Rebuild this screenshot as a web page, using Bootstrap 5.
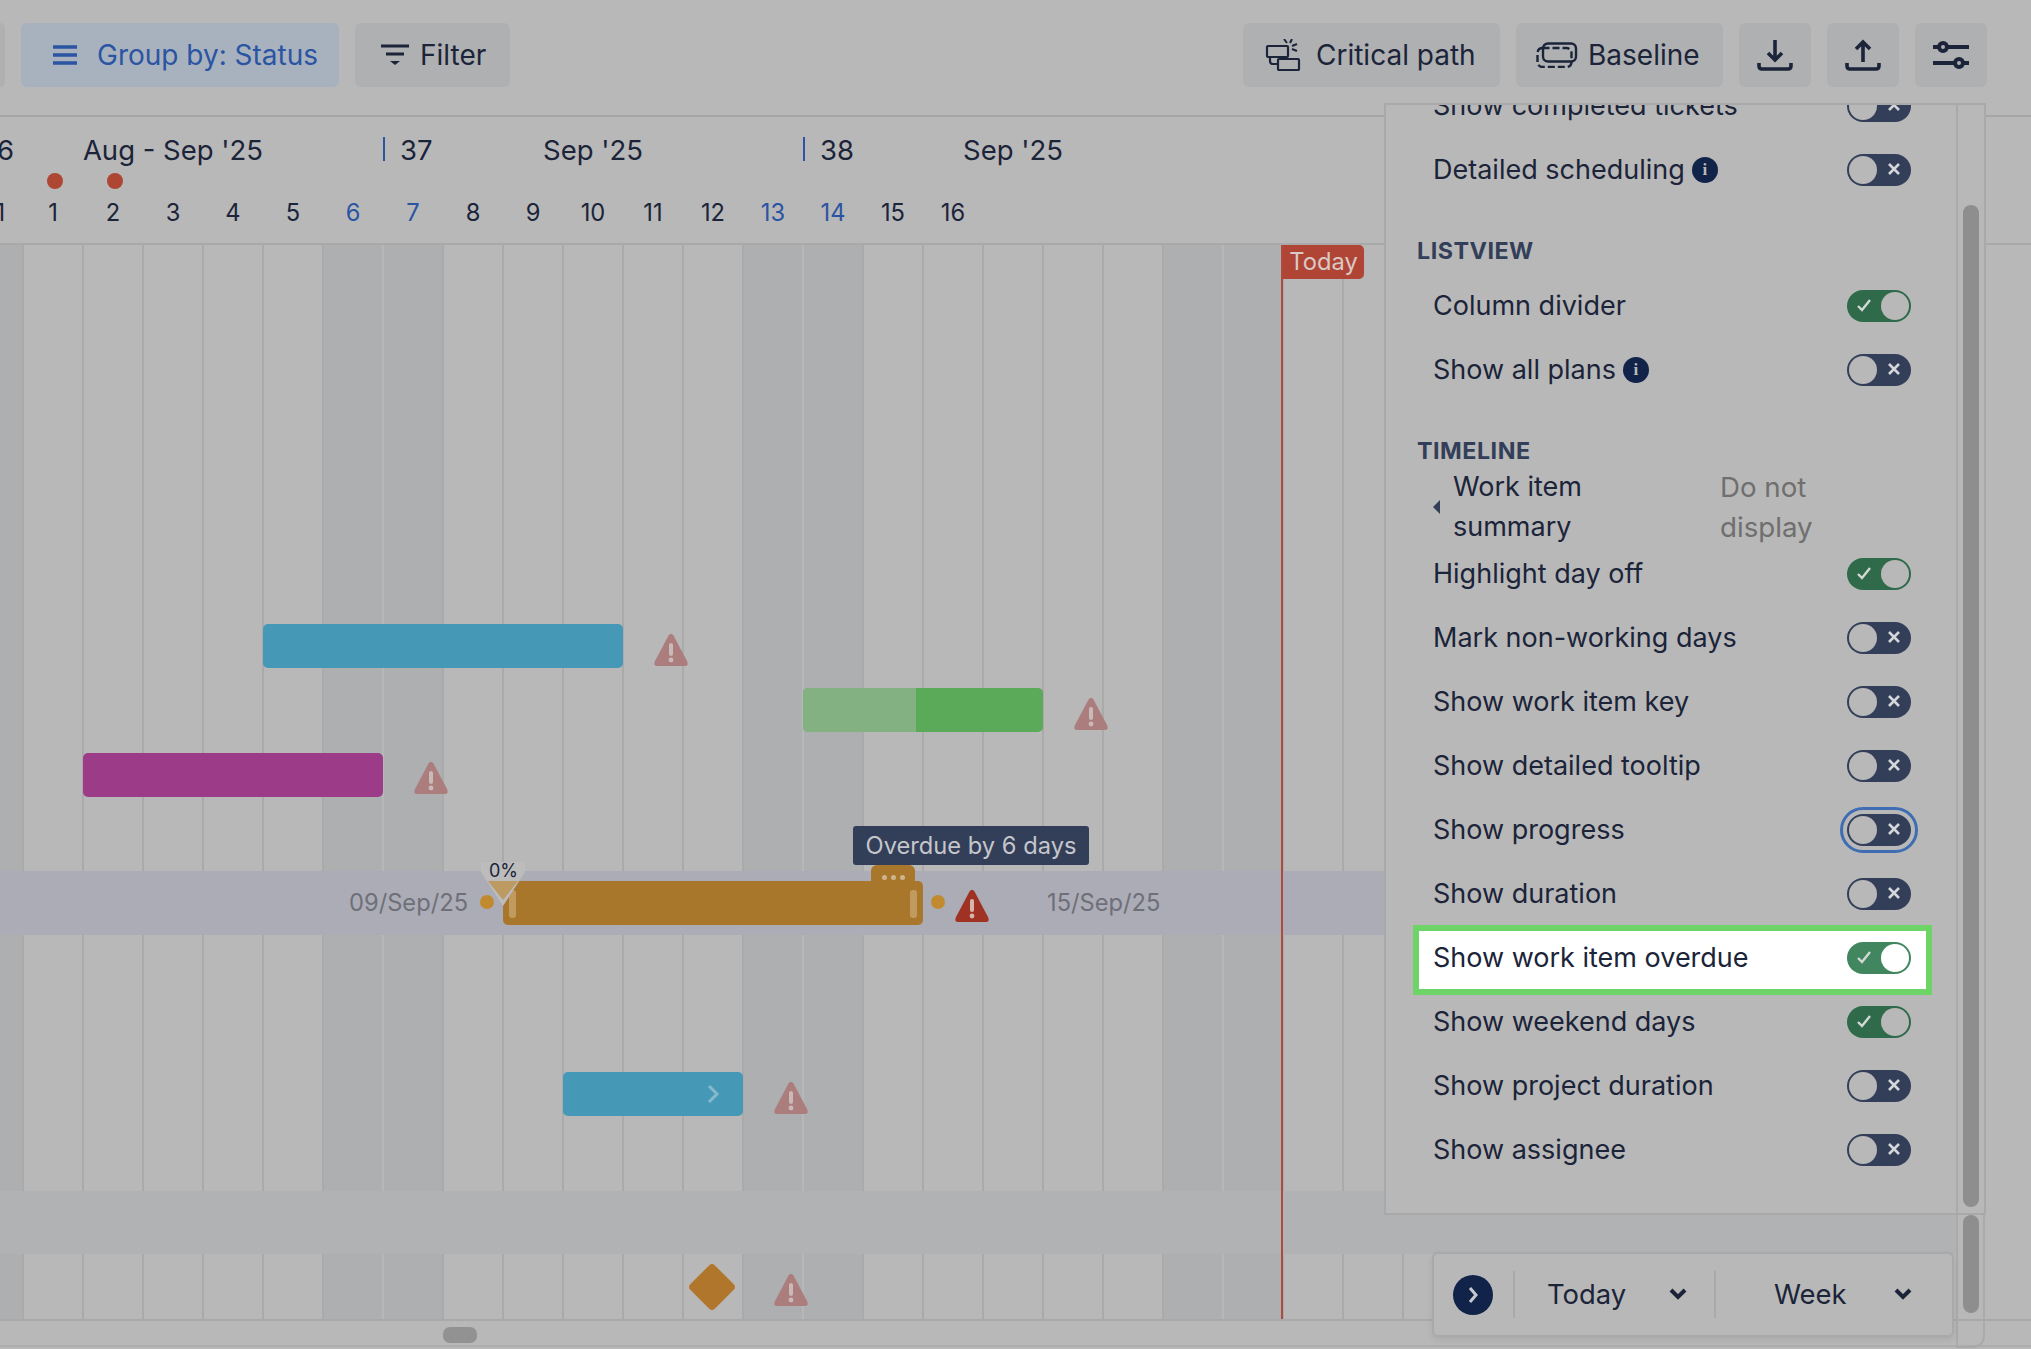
<!DOCTYPE html>
<html lang="en">
<head>
<meta charset="UTF-8">
<title>Timeline settings</title>
<link href="https://cdn.jsdelivr.net/npm/bootstrap@5.3.3/dist/css/bootstrap.min.css" rel="stylesheet">
<style>
    body { background: #b8b8b8; font-family: Inter, "Liberation Sans", sans-serif; color: #1b2439; overflow: hidden; }
    .app { width: 2031px; height: 1349px; overflow: hidden; position: relative; background: #b8b8b8; }

    /* toolbar */
    .tool-bar { height: 115px; padding: 23px 44px 0 0; }
    .tb-btn { height: 64px; background: #afb0b2; border: 0; border-radius: 6px; color: #1b2439; font-size: 28px; line-height: 1; padding: 0; display: flex; align-items: center; --bs-btn-hover-bg: #afb0b2; }
    .tb-sliver { width: 5px; border-radius: 0 6px 6px 0; }
    .tb-group { width: 318px; background: #a8b2be; color: #2b54a3; padding-left: 32px; gap: 20px; }
    .tb-filter { width: 155px; padding-left: 25px; gap: 10px; }
    .tb-critical { width: 257px; padding-left: 22px; gap: 15px; }
    .tb-baseline { width: 207px; padding-left: 20px; gap: 10px; }
    .tb-square { width: 72px; justify-content: center; }

    /* timeline header */
    .tl-head { height: 130px; border-top: 2px solid #a6a6a6; border-bottom: 2px solid #a9a9a9; }
    .wk-row { margin-left: -37px; padding-top: 15px; height: 50px; font-size: 27.5px; line-height: 36px; }
    .wk-cell { width: 420px; flex: none; display: grid; grid-template-columns: 1fr auto 1fr; }
    .wk-no { padding-left: 17px; position: relative; }
    .wk-no::before { content: ""; position: absolute; left: 0; top: 5px; width: 2px; height: 24px; background: #2b54a3; }
    .dot-row { margin-left: 47px; height: 16px; margin-top: 6px; gap: 44px; }
    .red-dot { width: 16px; height: 16px; border-radius: 50%; background: #ad4632; }
    .day-row { margin-left: -37px; margin-top: 8px; font-size: 23.7px; line-height: 32px; }
    .day-cell { width: 60px; flex: none; text-align: center; }
    .day-off { color: #2b54a3; }

    /* timeline body */
    .tl-body { height: 1074px; width: 1956px; position: relative; overflow: hidden; }
    .col-row { margin-left: -36px; height: 100%; }
    .col-cell { width: 60px; flex: none; border-right: 2px solid #aaaaaa; }
    .col-off { background: #aeafb1; border-right-color: #b6b7b8; }
    .col-off.col-last { border-right-color: #aaaaaa; }
    .band { position: absolute; left: 0; right: 0; }
    .band-active { top: 626px; height: 64px; background: #acacb7; }
    .band-gray { top: 946px; height: 63px; background: #b1b2b4; }
    .bar { position: absolute; border-radius: 5px; height: 44px; }
    .bar-blue { background: #4698b7; }
    .bar-one { left: 263px; top: 379px; width: 360px; }
    .bar-two { left: 563px; top: 827px; width: 180px; }
    .bar-green { left: 803px; top: 443px; width: 240px; background: #5aaa5a; overflow: hidden; }
    .bar-done { width: 113px; height: 100%; background: #83b182; }
    .bar-pink { left: 83px; top: 508px; width: 300px; background: #9c3b87; }
    .bar-orange { left: 503px; top: 636px; width: 420px; height: 44px; background: #a9772c; }
    .bar-tab { position: absolute; left: 871px; top: 620px; width: 44px; height: 24px; background: #a9772c; border-radius: 6px 6px 0 0; }
    .tab-dot { width: 5px; height: 5px; border-radius: 50%; background: #cdb68c; }
    .bar-grip { position: absolute; top: 9px; width: 7px; height: 28px; border-radius: 3px; background: #c09a5f; }
    .link-dot { position: absolute; top: 650px; width: 14px; height: 14px; border-radius: 50%; background: #c28a2e; }
    .date-lbl { position: absolute; top: 642px; font-size: 23.7px; line-height: 32px; color: #6e7079; }
    .pct-lbl { position: absolute; left: 489px; top: 616px; font-size: 18px; line-height: 20px; color: #1b2439; }
    .pin { position: absolute; }
    .tip-box { position: absolute; left: 853px; top: 581px; width: 236px; height: 39px; background: #333f59; color: #c4c6cb; border-radius: 3px; font-size: 23.7px; line-height: 39px; text-align: center; }
    .today-line { position: absolute; left: 1281px; top: 0; bottom: 0; width: 2px; background: #b04a3c; }
    .today-tag { position: absolute; left: 1283px; top: 0; width: 81px; height: 34px; background: #b04535; color: #d9c9c5; border-radius: 0 5px 5px 0; font-size: 23.7px; line-height: 34px; text-align: center; }
    .h-scroll { height: 28px; border-top: 2px solid #a9a9a9; border-bottom: 2px solid #adadad; padding: 6px 0 0 443px; }
    .h-thumb { width: 34px; height: 16px; border-radius: 7px; background: #929292; }

    /* settings panel */
    .side-panel { position: absolute; left: 1384px; top: 103px; width: 602px; height: 1112px; background: #b8b8b8; border: 2px solid #a9a9a9; overflow: hidden; }
    .side-list { width: 570px; flex: none; margin-top: -31px; }
    .side-bar { flex: 1; border-left: 2px solid #aaaaaa; padding: 100px 5px 0 5px; }
    .v-thumb { width: 16px; background: #8e8e8e; border-radius: 8px; }
    .thumb-one { height: 1002px; }
    .opt-row { height: 64px; padding: 0 45px 0 47px; font-size: 27px; line-height: 40px; }
    .opt-head { font-size: 23.3px; font-weight: 700; color: #333f59; letter-spacing: .5px; padding: 37px 0 0 31px; line-height: 24px; }
    .head-list { height: 72px; }
    .head-time { height: 64px; }
    .opt-summary { height: 82px; margin-bottom: -6px; padding: 0 0 0 47px; font-size: 27px; line-height: 40px; }
    .sum-caret { width: 0; height: 0; border-top: 7px solid transparent; border-bottom: 7px solid transparent; border-right: 7px solid #333f59; margin-right: 13px; }
    .sum-name { width: 267px; }
    .sum-value { color: #6f6f6f; width: 130px; font-size: 27.7px; }
    .opt-mark { margin: -1px 24px -5px 27px; height: 70px; padding: 0 15px 4px 14px; border: 6px solid #6fd468; background: #fff; position: relative; }
    .info-dot { width: 26px; height: 26px; border-radius: 50%; background: #12234a; color: #b8b8b8; font-size: 17px; font-weight: 700; line-height: 26px; text-align: center; margin-left: 7px; font-family: "Liberation Serif", serif; }
    .tog { width: 64px; height: 32px; border-radius: 16px; background: #333f59; border: 0; padding: 2px; display: flex; align-items: center; flex: none; position: relative; margin-left: auto; }
    .tog-knob { width: 28px; height: 28px; border-radius: 50%; background: #b8b8b8; flex: none; }
    .tog svg { position: absolute; top: 8px; }
    .tog-off svg { right: 10px; }
    .tog-on { background: #2f6a4a; justify-content: flex-end; }
    .tog-on svg { left: 9px; top: 7px; }
    .tog-focus { outline: 3px solid #3f6db3; outline-offset: 4px; }
    .opt-mark .tog-on { background: #41865f; }
    .opt-mark .tog-knob { background: #fff; }

    .track-low { position: absolute; left: 1956px; top: 1215px; width: 29px; height: 133px; border-left: 2px solid #aaaaaa; border-right: 2px solid #aaaaaa; border-bottom: 2px solid #aaaaaa; border-radius: 0 0 12px 0; padding-left: 5px; }
    .thumb-two { height: 98px; }
    .range-box { position: absolute; left: 1432px; top: 1252px; width: 522px; height: 85px; background: #b8b8b8; border: 2px solid #a9a9a9; border-radius: 6px; box-shadow: 0 3px 6px rgba(0,0,0,.08); font-size: 27.4px; }
    .range-go { width: 40px; height: 40px; border-radius: 50%; background: #12234a; margin-left: 19px; }
    .range-sep { width: 2px; height: 47px; background: #a9a9a9; }
    .range-sep-first { margin-left: 20px; }
    .range-today { width: 199px; padding: 0 27px 0 32px; }
    .range-week { flex: 1; padding: 0 40px 0 58px; }
</style>
</head>
<body>
<svg width="0" height="0" class="d-block position-absolute">
    <symbol id="warn" viewBox="0 0 34 33">
        <path d="M14.5 2.5 Q17 -1 19.5 2.5 L33 28 Q35 33 31 33 H3 Q-1 33 1 28 Z" fill="currentColor"/>
        <rect x="15" y="10" width="4" height="13" rx="2" fill="var(--mark)"/>
        <circle cx="17" cy="27" r="2.4" fill="var(--mark)"/>
    </symbol>
    <symbol id="tick" viewBox="0 0 16 16"><path d="M2 9 L6 13 L14 3" fill="none" stroke="#d3d9d5" stroke-width="2.4"/></symbol>
    <symbol id="cross" viewBox="0 0 14 14"><path d="M2 2 L12 12 M12 2 L2 12" fill="none" stroke="#d4d6da" stroke-width="2.6"/></symbol>
    <symbol id="chev" viewBox="0 0 18 12"><path d="M2 2 L9 9 L16 2" fill="none" stroke="#1b2439" stroke-width="4"/></symbol>
</svg>

<div class="app">
    <div class="tool-bar d-flex">
        <div class="d-flex gap-3">
            <button class="btn tb-btn tb-sliver" aria-label="Previous"></button>
            <button class="btn tb-btn tb-group">
                <svg width="24" height="20" viewBox="0 0 24 20"><path d="M0 2 H24 M0 10 H24 M0 18 H24" stroke="#2b54a3" stroke-width="3.6"/></svg>
                <span>Group by: Status</span>
            </button>
            <button class="btn tb-btn tb-filter">
                <svg width="30" height="22" viewBox="0 0 30 22"><path d="M1 2 H29 M6 10 H24" stroke="#1b2439" stroke-width="3.2"/><path d="M10 17 H20 L15 21 Z" fill="#1b2439"/></svg>
                <span>Filter</span>
            </button>
        </div>
        <div class="d-flex gap-3 ms-auto">
            <button class="btn tb-btn tb-critical">
                <svg width="36" height="32" viewBox="0 0 36 32" fill="none" stroke="#1b2439" stroke-width="2.2"><rect x="2" y="7" width="21" height="11" rx="1"/><rect x="13" y="20" width="21" height="11" rx="1"/><path d="M5 18 V22 Q5 25 8 25 H13"/><path d="M19 0 L22 4 M27 0 L25 4 M32 5 L27 7 M32 12 L27 10" stroke-width="2"/></svg>
                <span>Critical path</span>
            </button>
            <button class="btn tb-btn tb-baseline">
                <svg width="42" height="26" viewBox="0 0 42 26" fill="none" stroke="#1b2439" stroke-width="2.4"><rect x="7" y="1.5" width="33" height="18" rx="5"/><rect x="1.5" y="6" width="34" height="19" rx="5" stroke-dasharray="7 3"/></svg>
                <span>Baseline</span>
            </button>
            <button class="btn tb-btn tb-square" aria-label="Download">
                <svg width="36" height="32" viewBox="0 0 36 32" fill="none" stroke="#1b2439" stroke-width="3.6"><path d="M18 1 V21 M11 14 L18 21 L25 14"/><path d="M2 24 V27 Q2 30 5 30 H31 Q34 30 34 27 V24"/></svg>
            </button>
            <button class="btn tb-btn tb-square" aria-label="Upload">
                <svg width="36" height="32" viewBox="0 0 36 32" fill="none" stroke="#1b2439" stroke-width="3.6"><path d="M18 23 V3 M11 10 L18 3 L25 10"/><path d="M2 24 V27 Q2 30 5 30 H31 Q34 30 34 27 V24"/></svg>
            </button>
            <button class="btn tb-btn tb-square" aria-label="Settings">
                <svg width="36" height="28" viewBox="0 0 36 28" fill="none" stroke="#1b2439" stroke-width="4"><path d="M0 6 H6 M15 6 H36 M0 22 H21 M31 22 H36"/><circle cx="10" cy="6" r="4"/><circle cx="26" cy="22" r="4"/></svg>
            </button>
        </div>
    </div>

    <div class="tl-head">
        <div class="wk-row d-flex">
            <div class="wk-cell"><span class="wk-no">36</span><span>Aug - Sep '25</span></div>
            <div class="wk-cell"><span class="wk-no">37</span><span>Sep '25</span></div>
            <div class="wk-cell"><span class="wk-no">38</span><span>Sep '25</span></div>
        </div>
        <div class="dot-row d-flex"><span class="red-dot"></span><span class="red-dot"></span></div>
        <div class="day-row d-flex" id="dayRow"></div>
    </div>

    <div class="tl-body">
        <div class="col-row d-flex" id="colRow"></div>
        <div class="band band-active"></div>
        <div class="band band-gray"></div>

        <div class="bar bar-blue bar-one"></div>
        <svg class="pin" style="--mark:#c9b9b8;color:#ab7e7d;left:654px;top:388px" width="34" height="33"><use href="#warn"/></svg>
        <div class="bar bar-green"><div class="bar-done"></div></div>
        <svg class="pin" style="--mark:#c9b9b8;color:#ab7e7d;left:1074px;top:452px" width="34" height="33"><use href="#warn"/></svg>
        <div class="bar bar-pink"></div>
        <svg class="pin" style="--mark:#c9b9b8;color:#ab7e7d;left:414px;top:516px" width="34" height="33"><use href="#warn"/></svg>

        <span class="date-lbl" style="left:349px">09/Sep/25</span>
        <span class="link-dot" style="left:480px"></span>
        <div class="bar bar-orange">
            <span class="bar-grip" style="left:6px"></span>
            <span class="bar-grip" style="right:6px"></span>
        </div>
        <div class="bar-tab d-flex justify-content-center align-items-center gap-1"><span class="tab-dot"></span><span class="tab-dot"></span><span class="tab-dot"></span></div>
        <svg class="pin" style="left:480px;top:617px" width="46" height="46" viewBox="0 0 46 46"><path d="M1 0 H45 V10 L23 44 L1 10 Z" fill="#bcbcbc"/><path d="M8 19 H38 L23 38 Z" fill="#bd9a62"/></svg>
        <span class="pct-lbl">0%</span>
        <span class="link-dot" style="left:931px"></span>
        <svg class="pin" style="--mark:#d5b5ae;color:#a03224;left:955px;top:644px" width="34" height="33"><use href="#warn"/></svg>
        <span class="date-lbl" style="left:1047px">15/Sep/25</span>
        <div class="tip-box">Overdue by 6 days</div>

        <div class="bar bar-blue bar-two"></div>
        <svg class="pin" style="left:706px;top:839px" width="14" height="20" viewBox="0 0 14 20"><path d="M3 2 L11 10 L3 18" fill="none" stroke="#86b9cc" stroke-width="3"/></svg>
        <svg class="pin" style="--mark:#c9b9b8;color:#ab7e7d;left:774px;top:836px" width="34" height="33"><use href="#warn"/></svg>
        <svg class="pin" style="left:688px;top:1018px" width="48" height="48" viewBox="0 0 48 48"><path d="M21.5 2 Q24 0 26.5 2 L46 21.5 Q48 24 46 26.5 L26.5 46 Q24 48 21.5 46 L2 26.5 Q0 24 2 21.5 Z" fill="#b0762c"/></svg>
        <svg class="pin" style="--mark:#c9b9b8;color:#ab7e7d;left:774px;top:1028px" width="34" height="33"><use href="#warn"/></svg>

        <div class="today-line"></div>
        <div class="today-tag">Today</div>
    </div>
    <div class="h-scroll"><div class="h-thumb"></div></div>

    <div class="side-panel d-flex">
        <div class="side-list" id="sideList"></div>
        <div class="side-bar"><div class="v-thumb thumb-one"></div></div>
    </div>
    <div class="track-low"><div class="v-thumb thumb-two"></div></div>

    <div class="range-box d-flex align-items-center">
        <div class="range-go d-flex align-items-center justify-content-center flex-shrink-0">
            <svg width="12" height="18" viewBox="0 0 12 18"><path d="M3 2 L9 9 L3 16" fill="none" stroke="#c6c9d0" stroke-width="3"/></svg>
        </div>
        <div class="range-sep range-sep-first"></div>
        <div class="range-today d-flex align-items-center justify-content-between"><span>Today</span><svg width="18" height="12"><use href="#chev"/></svg></div>
        <div class="range-sep"></div>
        <div class="range-week d-flex align-items-center justify-content-between"><span>Week</span><svg width="18" height="12"><use href="#chev"/></svg></div>
    </div>
</div>

<script>
    // day numbers and the columns behind the bars
    const dayRow = document.getElementById('dayRow');
    const colRow = document.getElementById('colRow');
    const days = [31, 1, 2, 3, 4, 5, 6, 7, 8, 9, 10, 11, 12, 13, 14, 15, 16];
    const weekend = [31, 6, 7, 13, 14, 20, 21];
    days.forEach(d => {
        const cell = document.createElement('div');
        cell.className = 'day-cell' + (weekend.includes(d) && d !== 31 ? ' day-off' : '');
        cell.innerText = d;
        dayRow.appendChild(cell);
    });
    for (let i = 0; i < 34; i++) {
        const d = i === 0 ? 31 : i;
        const cell = document.createElement('div');
        cell.className = 'col-cell';
        if (weekend.includes(d)) cell.classList.add('col-off');
        if (d === 31 || d === 7 || d === 14 || d === 21) cell.classList.add('col-last');
        colRow.appendChild(cell);
    }

    // settings list
    const rows = [
        { name: 'Show completed tickets' },
        { name: 'Detailed scheduling', info: true },
        { head: 'LISTVIEW', cls: 'head-list' },
        { name: 'Column divider', on: true },
        { name: 'Show all plans', info: true },
        { head: 'TIMELINE', cls: 'head-time' },
        { summary: true },
        { name: 'Highlight day off', on: true },
        { name: 'Mark non-working days' },
        { name: 'Show work item key' },
        { name: 'Show detailed tooltip' },
        { name: 'Show progress', focus: true },
        { name: 'Show duration' },
        { name: 'Show work item overdue', on: true, mark: true },
        { name: 'Show weekend days', on: true },
        { name: 'Show project duration' },
        { name: 'Show assignee' }
    ];
    const sideList = document.getElementById('sideList');
    rows.forEach(r => {
        const el = document.createElement('div');
        if (r.head) {
            el.className = 'opt-head ' + r.cls;
            el.innerText = r.head;
        } else if (r.summary) {
            el.className = 'opt-summary d-flex align-items-center';
            el.innerHTML = '<span class="sum-caret"></span><span class="sum-name">Work item<br>summary</span>' +
                '<span class="sum-value">Do not display</span>';
        } else {
            el.className = 'opt-row d-flex align-items-center' + (r.mark ? ' opt-mark' : '');
            const icon = r.on
                ? '<svg width="16" height="16"><use href="#tick"/></svg>'
                : '<svg width="14" height="14"><use href="#cross"/></svg>';
            el.innerHTML = `<span>${r.name}</span>` +
                (r.info ? '<span class="info-dot">i</span>' : '') +
                `<button class="tog ${r.on ? 'tog-on' : 'tog-off'} ${r.focus ? 'tog-focus' : ''}" aria-label="${r.name}">` +
                `<span class="tog-knob"></span>${icon}</button>`;
        }
        sideList.appendChild(el);
    });
</script>
<script src="https://cdn.jsdelivr.net/npm/bootstrap@5.3.3/dist/js/bootstrap.bundle.min.js"></script>
</body>
</html>
